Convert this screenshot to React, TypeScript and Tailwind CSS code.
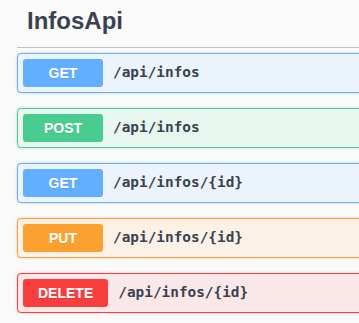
import type { FC } from "react";

type Op = {
  method: string;
  path: string;
  badge: string;
  box: string;
};

const ops: Op[] = [
  { method: "GET", path: "/api/infos", badge: "bg-[#61affe]", box: "bg-[#ebf3fb] border-[#61affe]" },
  { method: "POST", path: "/api/infos", badge: "bg-[#49cc90]", box: "bg-[#e8f6f0] border-[#49cc90]" },
  { method: "GET", path: "/api/infos/{id}", badge: "bg-[#61affe]", box: "bg-[#ebf3fb] border-[#61affe]" },
  { method: "PUT", path: "/api/infos/{id}", badge: "bg-[#fca130]", box: "bg-[#fbf1e6] border-[#fca130]" },
  { method: "DELETE", path: "/api/infos/{id}", badge: "bg-[#f93e3e]", box: "bg-[#fae7e7] border-[#f93e3e]" },
];

const OpBlock: FC<{ op: Op }> = ({ op }) => (
  <div
    className={`flex items-center border rounded-[4px] p-[5px] mb-[15px] shadow-[0_0_3px_rgba(0,0,0,0.19)] ${op.box}`}>
    <span
      className={`min-w-[80px] px-[15px] py-[6px] rounded-[3px] text-center text-white text-[14px] leading-[16px] font-bold font-['Liberation_Sans',Arial,sans-serif] [text-shadow:0_1px_0_rgba(0,0,0,0.1)] ${op.badge}`}>
      {op.method}
    </span>
    <span className="pl-[10px] text-[#3b4151] text-[14.4px] font-bold font-['DejaVu_Sans_Mono',monospace]">
      {op.path}
    </span>
  </div>
);

export default function App() {
  return (
    <div className="w-[359px] h-[323px] overflow-hidden bg-[#fafafa]">
      <div className="ml-[17px] w-[420px]">
        <h3 className="pl-[10px] pt-[7px] pb-[12px] mb-[5px] border-b border-[#c1c3c7] text-[24px] leading-[28px] font-bold text-[#3b4151] font-['Liberation_Sans',Arial,sans-serif]">
          InfosApi
        </h3>
        {ops.map((op, i) => (
          <OpBlock key={i} op={op} />
        ))}
      </div>
    </div>
  );
}
